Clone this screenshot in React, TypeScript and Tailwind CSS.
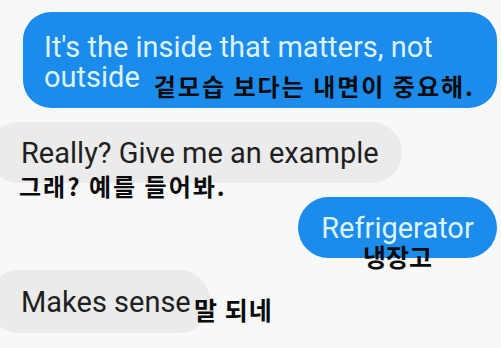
const en = "font-['Roboto',_'Liberation_Sans',_sans-serif]"
const ko = "font-['Noto_Sans_CJK_KR',_'Noto_Sans',_sans-serif] font-bold text-[#0b0b0b]"

export default function App() {
  return (
    <div className="w-[501px] h-[348px] overflow-hidden bg-[#f7f8f8] flex flex-col">
      {/* sent: inside matters */}
      <div className={`ml-[23px] mt-[12px] w-[474px] h-[96px] rounded-[28px] bg-[#1b8bec] pl-[21px] pt-[20px] text-[29px] leading-[30px] text-[#dcf3ff] ${en}`}>
        <div>It's the inside that matters, not</div>
        <div className="whitespace-nowrap">
          outside
          <span className={`ml-[14px] text-[24px] tracking-[2px] align-[-9px] ${ko}`}>겉모습 보다는 내면이 중요해.</span>
        </div>
      </div>

      {/* received: really? */}
      <div className={`ml-[-12px] mt-[14px] w-[414px] h-[61px] rounded-[31px] bg-[#ebebeb] flex items-center pl-[33px] text-[29px] leading-[30px] text-[#1f1f1f] ${en}`}>
        Really? Give me an example
      </div>
      <div className={`ml-[19px] mt-[-11px] h-[28px] text-[24px] leading-[28px] tracking-[2px] ${ko}`}>그래? 예를 들어봐.</div>

      {/* sent: refrigerator */}
      <div className="self-end mr-[4px] mt-[-3px] w-[199px] flex flex-col items-center">
        <div className={`w-full h-[61px] rounded-[31px] bg-[#1b8bec] flex items-center justify-center text-[29px] leading-[30px] text-[#dcf3ff] ${en}`}>
          Refrigerator
        </div>
        <div className={`mt-[-16px] h-[28px] text-[25px] leading-[28px] ${ko}`}>냉장고</div>
      </div>

      {/* received: makes sense */}
      <div className="flex items-center">
        <div className={`ml-[-12px] w-[222px] h-[63px] rounded-[31px] bg-[#ebebeb] flex items-center pl-[33px] text-[29px] leading-[30px] text-[#1f1f1f] ${en}`}>
          Makes sense
        </div>
        <div className={`ml-[-16px] mt-[14px] text-[25px] leading-[28px] tracking-[1px] ${ko}`}>말 되네</div>
      </div>
    </div>
  )
}
